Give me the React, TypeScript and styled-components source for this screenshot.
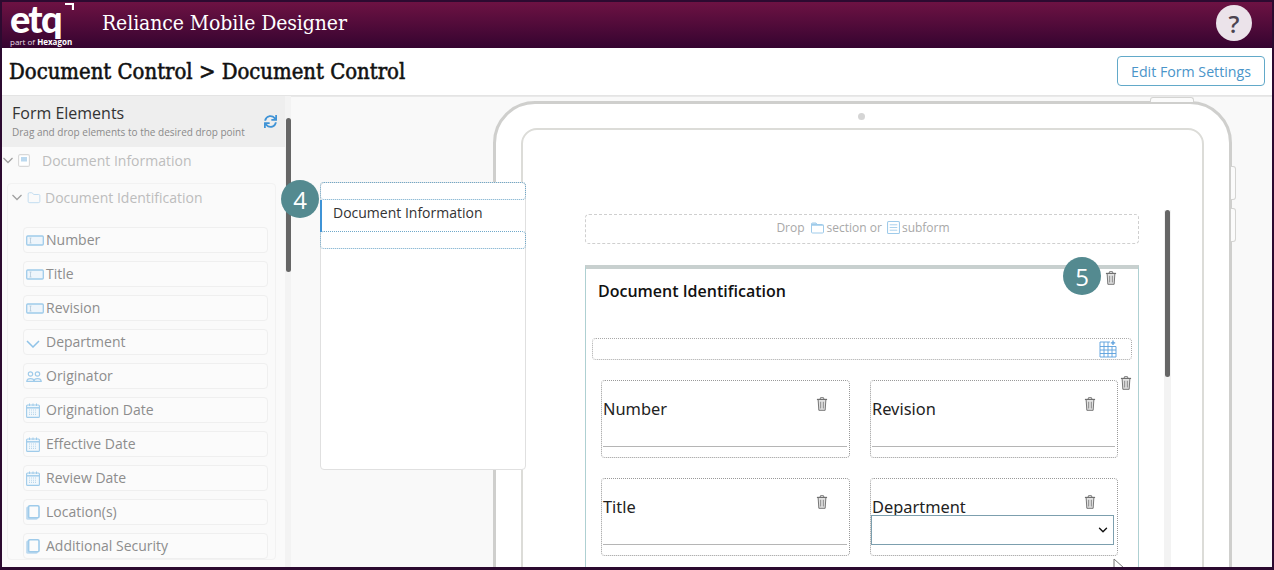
import React from 'react'
import styled, { createGlobalStyle } from 'styled-components'
import { ChevronDown, Folder } from 'lucide-react'
import { FaSync } from 'react-icons/fa'

const Global = createGlobalStyle`
  html, body { margin: 0; padding: 0; background: #fff; }
  * { box-sizing: border-box; }
  body { font-family: "Open Sans", "Noto Sans", sans-serif; }
`

const Frame = styled.div`
  width: 1274px;
  height: 570px;
  border: 2px solid #2c0a30;
  border-bottom-width: 3px;
  display: flex;
  flex-direction: column;
  overflow: hidden;
  background: #fff;
`

const Header = styled.header`
  height: 46px;
  flex: none;
  display: flex;
  align-items: center;
  padding: 0 20px 0 8px;
  background: linear-gradient(#6d1243, #350430);
  color: #fff;
`

const Logo = styled.div`
  position: relative;
  width: 64px;
  height: 46px;
`

const LogoMark = styled.div`
  font-family: "Lato", sans-serif;
  font-weight: 900;
  font-size: 38px;
  line-height: 32px;
  height: 32px;
  letter-spacing: -1.8px;
`

const LogoSub = styled.div`
  font-size: 8px;
  line-height: 10px;
  margin-top: 3px;
  white-space: nowrap;
  color: #e8dde4;
  b { color: #fff; }
`

const LogoCorner = styled.svg`
  position: absolute;
  left: 54px;
  top: 1px;
`

const AppName = styled.div`
  margin: -5px 0 0 28px;
  font-family: "DejaVu Serif Condensed", "DejaVu Serif", serif;
  font-size: 21px;
  letter-spacing: -0.1px;
  flex: 1;
`

const HelpButton = styled.div`
  width: 36px;
  height: 36px;
  border-radius: 50%;
  background: #ebe3ea;
  color: #4b4350;
  display: flex;
  align-items: center;
  justify-content: center;
  font-size: 24px;
  font-weight: 600;
  margin-top: -4px;
`

const TitleBar = styled.div`
  height: 48px;
  flex: none;
  display: flex;
  align-items: center;
  justify-content: space-between;
  padding: 0 7px 0 7px;
  border-bottom: 1px solid #e4e4e4;
`

const PageTitle = styled.h1`
  margin: 0;
  font-family: "DejaVu Serif Condensed", "DejaVu Serif", serif;
  font-size: 21.9px;
  font-weight: 400;
  -webkit-text-stroke: 0.55px #111;
  color: #111;
`

const EditButton = styled.button`
  width: 148px;
  height: 30px;
  margin-top: -1px;
  background: #fff;
  border: 1px solid #62a9c9;
  border-radius: 4px;
  color: #4a95c9;
  font-family: "Open Sans", sans-serif;
  font-size: 14.2px;
  padding: 0;
`

const Content = styled.div`
  flex: 1;
  min-height: 0;
  display: flex;
`

const Sidebar = styled.aside`
  width: 283px;
  flex: none;
  background: #fafafa;
  overflow: hidden;
`

const SideHead = styled.div`
  height: 51px;
  background: #eeeeee;
  padding: 7px 8px 0 10px;
  position: relative;
`

const SideTitle = styled.div`
  font-size: 16px;
  line-height: 21px;
  color: #333;
`

const SideHint = styled.div`
  font-size: 10px;
  line-height: 15px;
  margin-top: 1px;
  color: #8a8a8a;
`

const RefreshIcon = styled(FaSync)`
  position: absolute;
  right: 8px;
  top: 19px;
  font-size: 13px;
  color: #3f93d6;
`

const DocRow = styled.div`
  height: 27px;
  display: flex;
  align-items: center;
  gap: 4px;
  font-size: 14px;
  color: #bdbdbd;
  svg { flex: none; }
`

const DocLabel = styled.span`
  margin-left: 8px;
`

const SectionBox = styled.div`
  margin: 9px 9px 0 5px;
  border: 1px solid #f2f2f2;
  border-radius: 4px;
  padding: 0 7px 0 15px;
`

const SectionRow = styled.div`
  height: 27px;
  display: flex;
  align-items: center;
  gap: 4px;
  margin-left: -12px;
  font-size: 14px;
  color: #bdbdbd;
  svg { flex: none; }
`

const ElementList = styled.div`
  display: flex;
  flex-direction: column;
  gap: 8px;
  margin-top: 16px;
`

const ElementItem = styled.div`
  height: 26px;
  display: flex;
  align-items: center;
  border: 1px solid #efefef;
  border-radius: 4px;
  padding: 0 0 2px 2px;
  background: #fbfbfb;
  font-size: 14px;
  color: #8d8d8d;
`

const ElementIcon = styled.span<{ $low?: boolean }>`
  width: 20px;
  display: flex;
  align-items: center;
  color: #8fc3e8;
  flex: none;
  margin-top: ${p => (p.$low ? 5 : 2)}px;
`

const ScrollTrack = styled.div`
  width: 6px;
  flex: none;
  background: #f3f3f3;
  position: relative;
`

const ScrollThumb = styled.div`
  position: absolute;
  left: 1px;
  top: 22px;
  width: 5px;
  height: 154px;
  border-radius: 3px;
  background: #666;
`

const Main = styled.main`
  flex: 1;
  min-width: 0;
  position: relative;
  background: #f9f9f9;
  border-top: 1px solid #e9e9e9;
  padding: 4px 0 0 202px;
`

const Device = styled.div`
  position: relative;
  width: 739px;
  height: 620px;
  background: #fff;
  border: 3px solid #cfcfcd;
  border-radius: 42px;
  padding: 24px 25px 0 25px;
`

const TopButton = styled.div`
  position: absolute;
  left: 654px;
  top: -7px;
  width: 44px;
  height: 5px;
  background: #fbfbfb;
  border: 1px solid #d4d4d2;
  border-bottom: 0;
  border-radius: 3px 3px 0 0;
`

const SideButton = styled.div<{ $top: number }>`
  position: absolute;
  left: 735px;
  top: ${p => p.$top}px;
  width: 5px;
  height: 34px;
  background: #fbfbfb;
  border: 1px solid #d4d4d2;
  border-left: 0;
  border-radius: 0 3px 3px 0;
`

const Camera = styled.div`
  position: absolute;
  left: 362px;
  top: 9px;
  width: 7px;
  height: 7px;
  border-radius: 50%;
  background: #d5d5d5;
`

const Screen = styled.div`
  position: relative;
  height: 620px;
  border: 2px solid #dcdcd8;
  border-radius: 16px;
  padding: 84px 0 0 62px;
`

const DropZone = styled.div`
  width: 554px;
  height: 30px;
  border: 1px dashed #cfcfcf;
  border-radius: 4px;
  display: flex;
  align-items: center;
  justify-content: center;
  padding: 0 0 3px 2px;
  font-size: 12px;
  color: #a8a8a8;
`

const DropWord = styled.span<{ $l: number; $r: number }>`
  margin: 0 ${p => p.$r}px 0 ${p => p.$l}px;
`

const SectionCard = styled.section`
  position: relative;
  width: 554px;
  margin-top: 21px;
  height: 400px;
  border: 1px solid #aed0d2;
  border-top: 4px solid #c8d0cf;
  padding: 0 0 0 6px;
`

const CardTitle = styled.h3`
  margin: 0;
  padding: 12px 0 0 6px;
  height: 69px;
  font-size: 16px;
  line-height: 20px;
  font-weight: 600;
  color: #111;
`

const RowDrop = styled.div`
  width: 540px;
  height: 22px;
  border: 1px dotted #a8a8a8;
  border-radius: 4px;
  display: flex;
  align-items: center;
  justify-content: flex-end;
  padding-right: 14px;
`

const FieldGrid = styled.div`
  display: grid;
  grid-template-columns: 249px 248px;
  grid-auto-rows: 78px;
  gap: 20px;
  margin: 20px 0 0 9px;
`

const Field = styled.div`
  position: relative;
  border: 1px dotted #999;
  border-radius: 4px;
`

const FieldLabel = styled.label`
  position: absolute;
  left: 1px;
  top: 17px;
  font-family: "Noto Sans", sans-serif;
  font-size: 16.4px;
  line-height: 22px;
  color: #222;
`

const FieldLine = styled.div`
  position: absolute;
  left: 1px;
  right: 2px;
  bottom: 10px;
  height: 1px;
  background: #b5b5b5;
`

const SelectBox = styled.div`
  position: absolute;
  left: 0;
  right: 3px;
  top: 36px;
  height: 30px;
  background: #fff;
  border: 1px solid #7c9fae;
  display: flex;
  align-items: center;
  justify-content: flex-end;
  padding-right: 3px;
  color: #111;
`

const FieldTrash = styled.span`
  position: absolute;
  right: 20px;
  top: 16px;
  display: flex;
`

const CardTrash = styled.span`
  position: absolute;
  left: 518px;
  top: 2px;
  display: flex;
`

const ColumnTrash = styled.span`
  position: absolute;
  left: 533px;
  top: 107px;
  display: flex;
`

const ScreenTrack = styled.div`
  position: absolute;
  left: 641px;
  top: 80px;
  width: 7px;
  height: 500px;
  background: #f3f3f3;
`

const ScreenThumb = styled.div`
  margin: 0 auto;
  width: 5px;
  height: 167px;
  border-radius: 3px;
  background: #666;
`

const Cursor = styled.svg`
  position: absolute;
  left: 822px;
  top: 461px;
`

const PagesPanel = styled.div`
  position: absolute;
  left: 29px;
  top: 85px;
  width: 206px;
  height: 288px;
  background: #fff;
  border: 1px solid #e0e0e0;
  border-radius: 4px;
`

const PageDrop = styled.div`
  height: 18px;
  margin: -1px -1px 0;
  border: 1px dotted #6fa8c9;
  border-radius: 4px;
`

const PageItem = styled.div`
  height: 32px;
  margin-left: -1px;
  border-left: 2px solid #3f93d6;
  padding: 0 0 7px 11px;
  display: flex;
  align-items: center;
  font-size: 14px;
  color: #333;
`

const Badge = styled.div<{ $x: number; $y: number }>`
  position: absolute;
  left: ${p => p.$x}px;
  top: ${p => p.$y}px;
  width: 38px;
  height: 38px;
  border-radius: 50%;
  background: #548a90;
  color: #fff;
  display: flex;
  align-items: center;
  justify-content: center;
  font-size: 24px;
  z-index: 3;
`

const Trash = ({ size = 14 }: { size?: number }) => (
  <svg width={size} height={size} viewBox="0 0 16 16" fill="none" stroke="#707070" strokeWidth="1.1">
    <path d="M5.8 2.5 L6.3 0.8 H9.7 L10.2 2.5" />
    <path d="M2.2 2.8 H13.8" strokeWidth="1.4" />
    <path d="M3.6 3.4 L4.4 15.2 H11.6 L12.4 3.4" fill="#e2e2e2" />
    <path d="M6.4 5.5 V13 M9.6 5.5 V13" strokeWidth="1.4" stroke="#999" />
  </svg>
)

const InputIcon = () => (
  <svg width="18" height="11" viewBox="0 0 18 11" fill="#eef5fb" stroke="#9fcbea" strokeWidth="1.3">
    <rect x="0.7" y="1" width="16.6" height="9" rx="1" />
    <path d="M3.5 3 H5.5 M4.5 3 V8 M3.5 8 H5.5" stroke="#b3c9da" strokeWidth="0.8" />
  </svg>
)

const CopyIcon = () => (
  <svg width="14" height="15" viewBox="0 0 14 15" fill="none">
    <rect x="0.2" y="1.5" width="11.5" height="13.3" rx="1.5" fill="#bcd9ef" />
    <rect x="2.6" y="0.8" width="10.4" height="12" rx="1.2" fill="#fbfbfb" stroke="#9fcbea" strokeWidth="1.6" />
  </svg>
)

const DateIcon = () => (
  <svg width="14" height="15" viewBox="0 0 14 15" fill="#f2f8fc" stroke="#9fcbea" strokeWidth="1.1">
    <rect x="0.6" y="2" width="12.8" height="12.4" rx="1" />
    <path d="M0.6 4.8 H13.4" strokeWidth="1.4" />
    <path d="M3.5 0.5 V3 M7 0.5 V3 M10.5 0.5 V3" strokeWidth="1" />
    <path d="M3 7 H11 M3 9.2 H11 M3 11.4 H11" stroke="#b9d6ec" strokeWidth="1.1" strokeDasharray="1 1" />
  </svg>
)

const PeopleIcon = () => (
  <svg width="16" height="11" viewBox="0 0 16 11" fill="none" stroke="#9fcbea" strokeWidth="1.2">
    <circle cx="4.5" cy="3" r="2.2" />
    <circle cx="11.5" cy="3" r="2.2" />
    <path d="M0.8 10.4 C1 6.6 8 6.6 8 10.4 Z" />
    <path d="M8 10.4 C8 6.6 15 6.6 15.2 10.4 Z" />
  </svg>
)

const SelectIcon = () => (
  <svg width="14" height="8" viewBox="0 0 14 8" fill="none" stroke="#8fc3e8" strokeWidth="1.5">
    <path d="M1 1 L7 7 L13 1" />
  </svg>
)

const DocIcon = () => (
  <svg width="12" height="13" viewBox="0 0 12 13" fill="none">
    <rect x="0.6" y="0.6" width="10.8" height="11.8" rx="1.5" stroke="#d8d8d8" strokeWidth="1.1" fill="#fff" />
    <rect x="3" y="3" width="6" height="4.5" fill="#bcd9ef" />
  </svg>
)

const FormIcon = () => (
  <svg width="13" height="13" viewBox="0 0 12 12" fill="none" stroke="#9fcbea">
    <rect x="0.5" y="0.5" width="11" height="11" rx="1" />
    <path d="M2.5 3.5 H9.5 M2.5 6 H9.5 M2.5 8.5 H9.5" strokeWidth="0.8" />
  </svg>
)

const FolderSmall = () => (
  <svg width="13" height="12" viewBox="0 0 13 12" fill="#fff" stroke="#9fcbea">
    <path d="M0.5 2 A1 1 0 0 1 1.5 1 H5 L6 2.5 H11.5 A1 1 0 0 1 12.5 3.5 V10 A1 1 0 0 1 11.5 11 H1.5 A1 1 0 0 1 0.5 10 Z" />
    <path d="M0.5 1.5 H5.5 L6.5 3 H12.5 V3.8 H0.5 Z" fill="#9fcbea" stroke="none" />
  </svg>
)

const TableAdd = () => (
  <svg width="18" height="18" viewBox="0 0 18 18" fill="none" stroke="#5a9fdc" strokeWidth="0.9">
    <path d="M1 2 H11 M1 6.5 H17 M1 10 H17 M1 13.5 H17 M1 17 H17" />
    <path d="M1 2 V17 M5 2 V17 M9 2 V17 M13 6.5 V17 M17 6.5 V17" />
    <path d="M14 0.5 V5 M11.8 2.8 H16.2" strokeWidth="1.3" />
  </svg>
)

const RowChevron = () => (
  <svg width="12" height="7" viewBox="0 0 12 7" fill="none" stroke="#a0a0a0" strokeWidth="1.3">
    <path d="M1.5 1 L6 5.5 L10.5 1" />
  </svg>
)

type ElementKind = 'input' | 'select' | 'user' | 'date' | 'copy'

const elements: { label: string; kind: ElementKind }[] = [
  { label: 'Number', kind: 'input' },
  { label: 'Title', kind: 'input' },
  { label: 'Revision', kind: 'input' },
  { label: 'Department', kind: 'select' },
  { label: 'Originator', kind: 'user' },
  { label: 'Origination Date', kind: 'date' },
  { label: 'Effective Date', kind: 'date' },
  { label: 'Review Date', kind: 'date' },
  { label: 'Location(s)', kind: 'copy' },
  { label: 'Additional Security', kind: 'copy' },
]

const kindIcon = (kind: ElementKind) => {
  if (kind === 'input') return <InputIcon />
  if (kind === 'select') return <SelectIcon />
  if (kind === 'user') return <PeopleIcon />
  if (kind === 'date') return <DateIcon />
  return <CopyIcon />
}

const fields = ['Number', 'Revision', 'Title']

const App = () => {
  return (
    <Frame>
      <Global />
      <Header>
        <Logo>
          <LogoMark>etq</LogoMark>
          <LogoCorner width="10" height="8" viewBox="0 0 10 8" fill="none" stroke="#fff" strokeWidth="2.2">
            <path d="M1 1 H9 V7" />
          </LogoCorner>
          <LogoSub>part of <b>Hexagon</b></LogoSub>
        </Logo>
        <AppName>Reliance Mobile Designer</AppName>
        <HelpButton>?</HelpButton>
      </Header>
      <TitleBar>
        <PageTitle>Document Control &gt; Document Control</PageTitle>
        <EditButton>Edit Form Settings</EditButton>
      </TitleBar>
      <Content>
        <Sidebar>
          <SideHead>
            <SideTitle>Form Elements</SideTitle>
            <SideHint>Drag and drop elements to the desired drop point</SideHint>
            <RefreshIcon />
          </SideHead>
          <DocRow>
            <RowChevron />
            <DocIcon />
            <DocLabel>Document Information</DocLabel>
          </DocRow>
          <SectionBox>
            <SectionRow>
              <RowChevron />
              <Folder size={14} strokeWidth={1.4} color="#b7d7ee" />
              <span>Document Identification</span>
            </SectionRow>
            <ElementList>
              {elements.map(el => (
                <ElementItem key={el.label}>
                  <ElementIcon $low={el.kind === 'select'}>{kindIcon(el.kind)}</ElementIcon>
                  <span>{el.label}</span>
                </ElementItem>
              ))}
            </ElementList>
          </SectionBox>
        </Sidebar>
        <ScrollTrack><ScrollThumb /></ScrollTrack>
        <Main>
          <Device>
            <TopButton />
            <SideButton $top={62} />
            <SideButton $top={104} />
            <Camera />
            <Screen>
              <DropZone>
                <DropWord $l={0} $r={6}>Drop</DropWord>
                <FolderSmall />
                <DropWord $l={3} $r={5}>section or</DropWord>
                <FormIcon />
                <DropWord $l={2} $r={0}>subform</DropWord>
              </DropZone>
              <SectionCard>
                <CardTitle>Document Identification</CardTitle>
                <CardTrash><Trash /></CardTrash>
                <RowDrop><TableAdd /></RowDrop>
                <ColumnTrash><Trash /></ColumnTrash>
                <FieldGrid>
                  {fields.map(name => (
                    <Field key={name}>
                      <FieldLabel>{name}</FieldLabel>
                      <FieldTrash><Trash /></FieldTrash>
                      <FieldLine />
                    </Field>
                  ))}
                  <Field>
                    <FieldLabel>Department</FieldLabel>
                    <FieldTrash><Trash /></FieldTrash>
                    <SelectBox><ChevronDown size={14} strokeWidth={2.4} /></SelectBox>
                  </Field>
                </FieldGrid>
              </SectionCard>
              <ScreenTrack><ScreenThumb /></ScreenTrack>
            </Screen>
          </Device>
          <PagesPanel>
            <PageDrop />
            <PageItem>Document Information</PageItem>
            <PageDrop />
          </PagesPanel>
          <Badge $x={-10} $y={83}>4</Badge>
          <Badge $x={772} $y={160}>5</Badge>
          <Cursor width="13" height="14" viewBox="0 0 13 14" fill="#fff" stroke="#777">
            <path d="M1 1 V13 L4 10 H11 Z" />
          </Cursor>
        </Main>
      </Content>
    </Frame>
  )
}

export default App
